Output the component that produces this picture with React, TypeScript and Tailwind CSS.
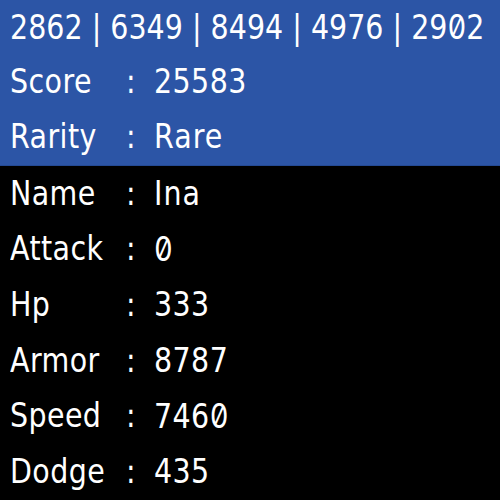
import React from "react";

const rows: [string, string][] = [
  ["Score", "25583"],
  ["Rarity", "Rare"],
  ["Name", "Ina"],
  ["Attack", "0"],
  ["Hp", "333"],
  ["Armor", "8787"],
  ["Speed", "7460"],
  ["Dodge", "435"],
];

function Val({ text }: { text: string }) {
  return (
    <>
      {text.split("").map((c, i) =>
        c === "0" ? (
          <span
            key={i}
            className="slashed-zero tabular-nums text-[29px]"
            style={{ fontFamily: "Inter, sans-serif" }}
          >
            0
          </span>
        ) : (
          <React.Fragment key={i}>{c}</React.Fragment>
        )
      )}
    </>
  );
}

function Row({ label, value }: { label: string; value: string }) {
  const isNum = /^\d+$/.test(value);
  return (
    <div className="flex flex-1 items-center pl-[10px]">
      <span className="w-[116px] inline-block scale-y-[1.18] tracking-[0.4px]">{label}</span>
      <span className="w-[28px] inline-block scale-y-[1.18]">:</span>
      <span className={`inline-block scale-y-[1.18] ${isNum ? "tracking-[0.4px]" : "tracking-[1px]"}`}>
        <Val text={value} />
      </span>
    </div>
  );
}

export default function App() {
  return (
    <div
      className="w-[500px] h-[500px] bg-black text-white text-[28.5px] leading-none flex flex-col"
      style={{ fontFamily: '"DejaVu Sans", sans-serif' }}
    >
      <div className="flex flex-col h-[166px] bg-[#2c55a6] border-b border-[#244a94]">
        <div className="flex flex-1 items-center pl-[10px]">
          <span className="inline-block scale-y-[1.18]">
            <Val text="2862 | 6349 | 8494 | 4976 | 2902" />
          </span>
        </div>
        <Row label={rows[0][0]} value={rows[0][1]} />
        <Row label={rows[1][0]} value={rows[1][1]} />
      </div>
      <div className="flex flex-col flex-1">
        {rows.slice(2).map(([l, v]) => (
          <Row key={l} label={l} value={v} />
        ))}
      </div>
    </div>
  );
}
